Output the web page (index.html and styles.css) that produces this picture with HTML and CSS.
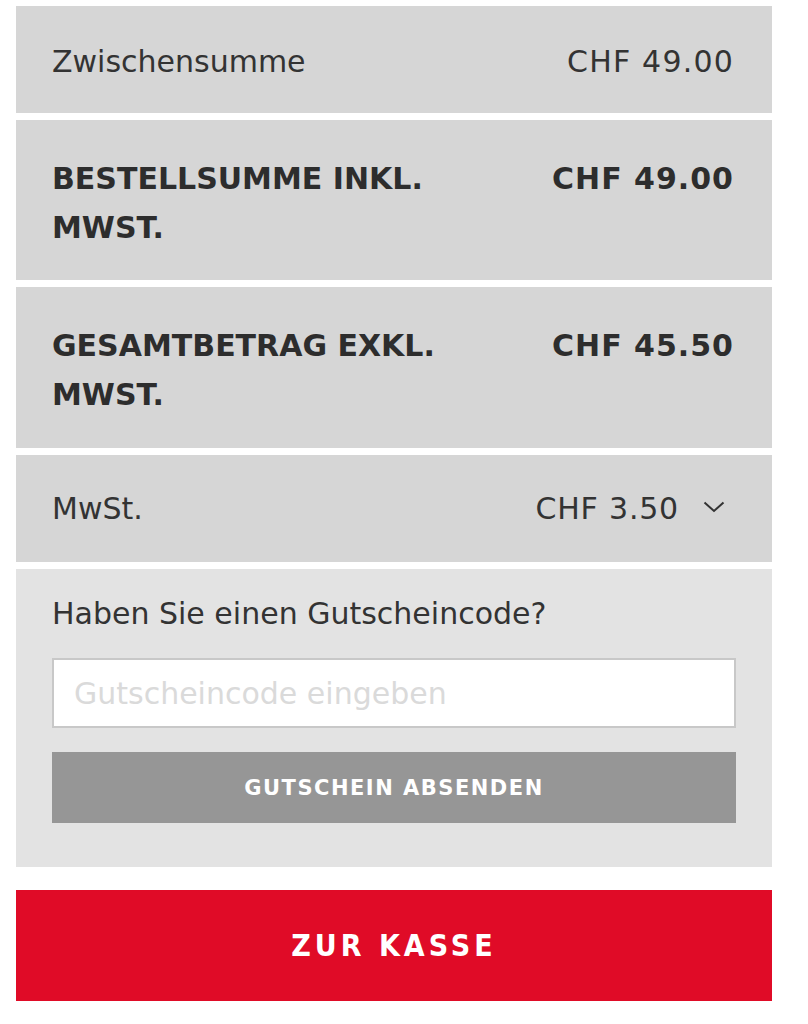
FILE: index.html
```html
<!DOCTYPE html>
<html lang="de">
<head>
<meta charset="utf-8">
<title>Warenkorb Summe</title>
<link rel="stylesheet" href="styles.css">
</head>
<body>
<div class="summary">
  <div class="row row-simple row-sub">
    <span class="label">Zwischensumme</span>
    <span class="value">CHF 49.00</span>
  </div>
  <div class="row row-total">
    <span class="label">BESTELLSUMME INKL. MWST.</span>
    <span class="value">CHF 49.00</span>
  </div>
  <div class="row row-total row-total-b">
    <span class="label">GESAMTBETRAG EXKL. MWST.</span>
    <span class="value">CHF 45.50</span>
  </div>
  <div class="row row-simple row-tax">
    <span class="label">MwSt.</span>
    <span class="value value-toggle">CHF 3.50
      <svg class="chevron" width="22" height="12" viewBox="0 0 22 12" aria-hidden="true"><polyline points="1.5,1.5 11,10 20.5,1.5" fill="none" stroke="#333" stroke-width="2"/></svg>
    </span>
  </div>
  <div class="coupon">
    <p class="coupon-title">Haben Sie einen Gutscheincode?</p>
    <input class="coupon-input" type="text" placeholder="Gutscheincode eingeben">
    <button class="coupon-btn" type="button">GUTSCHEIN ABSENDEN</button>
  </div>
  <button class="checkout" type="button">ZUR KASSE</button>
</div>
</body>
</html>
```
FILE: styles.css
```css
html, body {
  margin: 0;
  padding: 0;
  background: #ffffff;
}

body {
  font-family: "DejaVu Sans", "Open Sans", sans-serif;
  color: #333333;
}

.summary {
  width: 756px;
  margin: 6px 0 0 16px;
  display: flex;
  flex-direction: column;
  gap: 7px;
}

.row {
  background: #d6d6d6;
  display: flex;
  justify-content: space-between;
  align-items: flex-start;
  padding: 0 38px 0 36px;
}

.row-simple {
  height: 107px;
  box-sizing: border-box;
  padding-top: 37px;
  font-size: 30px;
  line-height: 36px;
}

.row-sub {
  padding-top: 38px;
}

.row-tax {
  padding-top: 36px;
}

.row-total {
  box-sizing: border-box;
  height: 160px;
  padding-top: 34px;
  font-size: 30px;
  line-height: 49px;
  font-weight: bold;
  color: #2d2d2d;
}

.row-total-b {
  height: 161px;
}

.row-total .label {
  width: 430px;
}

.value {
  white-space: nowrap;
  letter-spacing: 1.2px;
}

.row-total .value {
  letter-spacing: 1px;
}

.value-toggle {
  display: flex;
  align-items: center;
  gap: 24px;
  margin-right: 9px;
  letter-spacing: 0.8px;
}

.chevron {
  display: block;
  margin-top: -4px;
}

.coupon {
  background: #e3e3e3;
  padding: 27px 36px 44px 36px;
  display: flex;
  flex-direction: column;
}

.coupon-title {
  margin: 0 0 26px 0;
  font-size: 30px;
  line-height: 36px;
  color: #333333;
}

.coupon-input {
  box-sizing: border-box;
  width: 684px;
  height: 70px;
  border: 2px solid #c8c8c8;
  background: #ffffff;
  padding: 0 20px;
  font-family: "DejaVu Sans", "Open Sans", sans-serif;
  font-size: 30px;
  color: #333333;
  outline: none;
  margin: 0 0 24px 0;
}

.coupon-input::placeholder {
  color: #dadada;
}

.coupon-btn {
  box-sizing: border-box;
  width: 684px;
  height: 71px;
  border: none;
  background: #969696;
  color: #ffffff;
  font-family: "DejaVu Sans", "Open Sans", sans-serif;
  font-weight: bold;
  font-size: 21px;
  letter-spacing: 1.5px;
  padding: 0;
}

.checkout {
  box-sizing: border-box;
  width: 756px;
  height: 111px;
  margin-top: 16px;
  border: none;
  background: #e00b27;
  color: #ffffff;
  font-family: "DejaVu Sans Condensed", "DejaVu Sans", sans-serif;
  font-weight: bold;
  font-size: 30px;
  letter-spacing: 4px;
  padding: 0;
}
```
